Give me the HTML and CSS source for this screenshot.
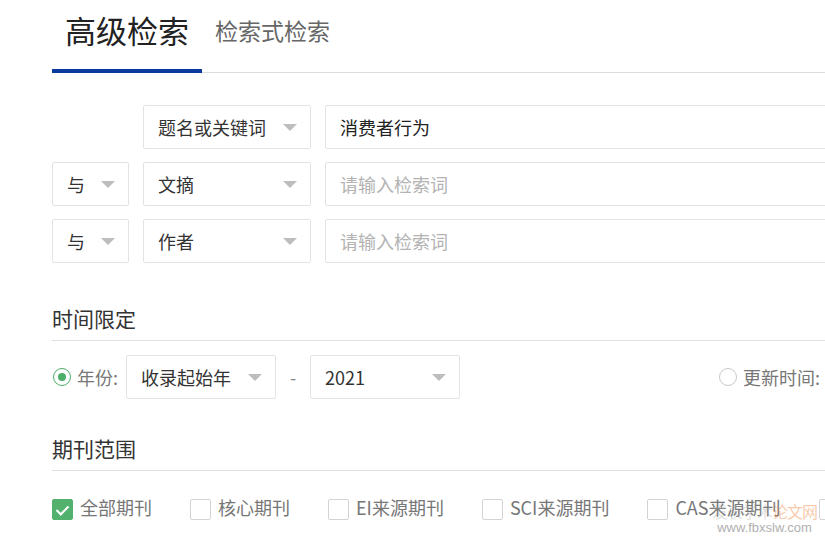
FILE: index.html
```html
<!DOCTYPE html>
<html lang="zh-CN">
<head>
    <meta charset="UTF-8">
    <meta name="viewport" content="width=device-width, initial-scale=1.0">
    <title>高级检索</title>
    <link rel="stylesheet" href="styles.css">
</head>
<body>
    <div class="page">
        <div class="tabs">
            <div class="tab active">高级检索</div>
            <div class="tab">检索式检索</div>
        </div>

        <div class="search-rows">
            <div class="search-row">
                <div class="logic-blank"></div>
                <div class="select field-select"><span>题名或关键词</span><i class="arrow"></i></div>
                <div class="input"><span class="value">消费者行为</span></div>
            </div>
            <div class="search-row">
                <div class="select logic-select"><span>与</span><i class="arrow"></i></div>
                <div class="select field-select"><span>文摘</span><i class="arrow"></i></div>
                <div class="input"><span class="placeholder">请输入检索词</span></div>
            </div>
            <div class="search-row">
                <div class="select logic-select"><span>与</span><i class="arrow"></i></div>
                <div class="select field-select"><span>作者</span><i class="arrow"></i></div>
                <div class="input"><span class="placeholder">请输入检索词</span></div>
            </div>
        </div>

        <h2 class="section-title time-title">时间限定</h2>
        <div class="time-row">
            <label class="radio checked"><i class="radio-dot"></i><span>年份:</span></label>
            <div class="select year-select"><span>收录起始年</span><i class="arrow"></i></div>
            <span class="dash">-</span>
            <div class="select year-select"><span>2021</span><i class="arrow"></i></div>
            <label class="radio update"><i class="radio-dot"></i><span>更新时间:</span></label>
        </div>

        <h2 class="section-title journal-title">期刊范围</h2>
        <div class="check-row">
            <label class="check checked"><i class="box"></i><span>全部期刊</span></label>
            <label class="check"><i class="box"></i><span>核心期刊</span></label>
            <label class="check"><i class="box"></i><span>EI来源期刊</span></label>
            <label class="check"><i class="box"></i><span>SCI来源期刊</span></label>
            <label class="check"><i class="box"></i><span>CAS来源期刊</span></label>
            <label class="check"><i class="box"></i></label>
        </div>
    </div>

    <div class="watermark">
        <span class="wm-cn">发表学术<em>论文网</em></span>
        <span class="wm-url">www.fbxslw.com</span>
    </div>
</body>
</html>
```

FILE: styles.css
```css
* {
    margin: 0;
    padding: 0;
    box-sizing: border-box;
}

body {
    font-family: "Noto Sans CJK SC", "Noto Sans", sans-serif;
    background: #fff;
    color: #333;
    width: 825px;
    height: 541px;
    overflow: hidden;
    position: relative;
}

.page {
    padding-left: 52px;
    width: 825px;
}

.tabs {
    display: flex;
    align-items: flex-end;
    height: 73px;
    border-bottom: 1px solid #dcdcdc;
}

.tab {
    font-size: 23px;
    color: #666;
    line-height: 60px;
    height: 73px;
    margin-bottom: -1px;
    padding-left: 13px;
}

.tab.active {
    width: 150px;
    font-size: 31px;
    color: #222;
    border-bottom: 4px solid #0b3a9e;
}

.search-rows {
    margin-top: 32px;
    display: flex;
    flex-direction: column;
    gap: 13px;
}

.search-row {
    display: flex;
    gap: 14px;
    height: 44px;
}

.logic-blank {
    width: 77px;
    flex-shrink: 0;
}

.select {
    position: relative;
    display: flex;
    align-items: center;
    flex-shrink: 0;
    height: 44px;
    border: 1px solid #e3e3e3;
    border-radius: 2px;
    font-size: 18px;
    color: #333;
    padding-left: 14px;
}

.arrow {
    position: absolute;
    right: 13px;
    top: 18px;
    width: 0;
    height: 0;
    border-left: 7px solid transparent;
    border-right: 7px solid transparent;
    border-top: 7px solid #bdbdbd;
}

.logic-select {
    width: 77px;
}

.field-select {
    width: 168px;
}

.input {
    display: flex;
    align-items: center;
    flex-shrink: 0;
    width: 560px;
    height: 44px;
    border: 1px solid #e3e3e3;
    border-radius: 2px;
    padding-left: 14px;
    font-size: 18px;
}

.value {
    color: #222;
}

.placeholder {
    color: #b3b3b3;
}

.section-title {
    font-size: 21px;
    font-weight: normal;
    color: #333;
    line-height: 37px;
    height: 41px;
    border-bottom: 1px solid #e0e0e0;
    width: 773px;
}

.time-title {
    margin-top: 37px;
}

.time-row {
    display: flex;
    align-items: center;
    margin-top: 14px;
    height: 44px;
}

.radio {
    display: flex;
    align-items: center;
    font-size: 18px;
    color: #777;
    white-space: nowrap;
}

.radio-dot {
    width: 18px;
    height: 18px;
    border: 1px solid #c8c8c8;
    border-radius: 50%;
    margin-left: 1px;
    margin-right: 6px;
    position: relative;
}

.radio.checked .radio-dot {
    border-color: #4cae6a;
}

.radio.checked .radio-dot::after {
    content: "";
    position: absolute;
    left: 4px;
    top: 4px;
    width: 8px;
    height: 8px;
    border-radius: 50%;
    background: #4cae6a;
}

.radio.checked span {
    margin-right: 8px;
}

.year-select {
    width: 150px;
}

.dash {
    width: 34px;
    text-align: center;
    color: #888;
    font-size: 18px;
}

.radio.update {
    margin-left: 258px;
}

.journal-title {
    margin-top: 31px;
}

.check-row {
    display: flex;
    align-items: center;
    gap: 38px;
    margin-top: 27px;
    height: 22px;
}

.check {
    display: flex;
    align-items: center;
    height: 22px;
    line-height: 22px;
    font-size: 18px;
    color: #777;
    white-space: nowrap;
}

.check span {
    position: relative;
    top: -2px;
}

.box {
    width: 21px;
    height: 21px;
    border: 1px solid #d3d3d3;
    border-radius: 2px;
    margin-right: 7px;
    position: relative;
}

.check.checked .box {
    background: #52b26d;
    border-color: #52b26d;
}

.check.checked .box::after {
    content: "";
    position: absolute;
    left: 6px;
    top: 3px;
    width: 5px;
    height: 10px;
    border-right: 2px solid #fff;
    border-bottom: 2px solid #fff;
    transform: rotate(45deg);
}

.watermark {
    position: absolute;
    left: 712px;
    top: 502px;
    display: flex;
    flex-direction: column;
    align-items: center;
    pointer-events: none;
}

.wm-cn {
    font-size: 16px;
    color: rgba(170, 170, 170, 0.35);
    line-height: 18px;
    letter-spacing: -1px;
}

.wm-cn em {
    font-style: normal;
    color: rgba(240, 150, 90, 0.5);
}

.wm-url {
    font-family: "Liberation Sans", Arial, sans-serif;
    font-size: 13px;
    color: #b0b0b0;
    line-height: 16px;
}
```
